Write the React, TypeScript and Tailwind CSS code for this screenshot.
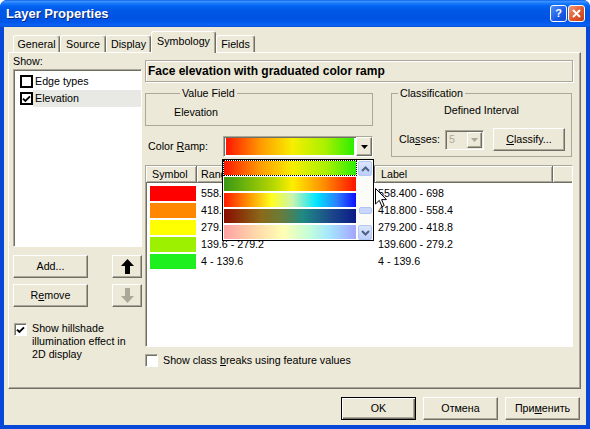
import React from "react";

const raised =
  "border border-t-white border-l-white border-r-[#716f64] border-b-[#716f64] shadow-[inset_-1px_-1px_0_#aca899]";
const sunken =
  "border border-t-[#aca899] border-l-[#aca899] border-r-white border-b-white shadow-[inset_1px_1px_0_#716f64]";

const ramps = [
  "bg-[linear-gradient(to_right,#ff1500,#ff9a00_27%,#f7ee00_52%,#a8f000_78%,#2cee00)]",
  "bg-[linear-gradient(to_right,#3a9815,#b8d800_38%,#ffee00_52%,#ff8c00_76%,#ff1200)]",
  "bg-[linear-gradient(to_right,#ff1a00,#ff9000_18%,#ffff20_36%,#c8f4b0_52%,#00e6ff_70%,#2a7cff_86%,#1010ff)]",
  "bg-[linear-gradient(to_right,#8a0c00,#8a6a18_28%,#687c3c_44%,#1e8a84_60%,#1c4c8a_80%,#0c1a88)]",
  "bg-[linear-gradient(to_right,#ffa0a4,#ffd4a8_22%,#ffffb4_45%,#c4ffd8_64%,#a4e6ff_80%,#a4a4ff)]",
];

const classes = [
  { color: "bg-[#ff0000]", range: "558.4 - 698", label: "558.400 - 698" },
  { color: "bg-[#ff8800]", range: "418.8 - 558.4", label: "418.800 - 558.4" },
  { color: "bg-[#ffff00]", range: "279.2 - 418.8", label: "279.200 - 418.8" },
  { color: "bg-[#9cf000]", range: "139.6 - 279.2", label: "139.600 - 279.2" },
  { color: "bg-[#1ef01e]", range: "4 - 139.6", label: "4 - 139.6" },
];

const tabs = [
  { name: "General", w: "w-[47px]" },
  { name: "Source", w: "w-[46px]" },
  { name: "Display", w: "w-[45px]" },
  { name: "Symbology", w: "w-[65px]", active: true },
  { name: "Fields", w: "w-[39px]" },
];

function Check() {
  return (
    <svg width="9" height="8" viewBox="0 0 9 8">
      <path d="M1 3.6 L3.4 6 L8 1.4" fill="none" stroke="#000" strokeWidth="1.9" />
    </svg>
  );
}

function Btn({ w, def, children }: { w: string; def?: boolean; children: React.ReactNode }) {
  return (
    <button
      type="button"
      className={`${w} h-[23px] flex items-center justify-center bg-[#ece9d8] ${
        def
          ? "border border-black shadow-[inset_1px_1px_0_#fff,inset_-1px_-1px_0_#716f64,inset_-2px_-2px_0_#aca899]"
          : raised
      }`}
    >
      {children}
    </button>
  );
}

function DownTri({ color }: { color: string }) {
  return (
    <svg width="7" height="4" viewBox="0 0 7 4">
      <path d="M0 0 H7 L3.5 4 Z" fill={color} />
    </svg>
  );
}

function ScrollBtn({ up }: { up?: boolean }) {
  return (
    <div className="w-[14px] h-[15px] rounded-[2px] border border-[#b4c8f6] bg-[linear-gradient(to_bottom,#dce6fd,#bccffa)] flex items-center justify-center">
      <svg width="9" height="6" viewBox="0 0 9 6">
        <path
          d={up ? "M1 5 L4.5 1.5 L8 5" : "M1 1 L4.5 4.5 L8 1"}
          fill="none"
          stroke="#4d6185"
          strokeWidth="2"
        />
      </svg>
    </div>
  );
}

function TitleBar() {
  return (
    <div className="h-[27px] flex items-center pl-[6px] pr-[5px] bg-[linear-gradient(180deg,#0a5ee8_0%,#3d93ff_5%,#1a7cfc_12%,#0364f2_22%,#0057e6_40%,#0054e3_65%,#0057ea_82%,#0a62f4_92%,#0a50d8_100%)]">
      <div className="flex-1 text-white font-bold text-[13px] [text-shadow:1px_1px_0_#0c2a80]">
        Layer Properties
      </div>
      <div className="flex gap-[1px]">
        <div className="w-[17px] h-[17px] rounded-[3px] border border-white bg-[linear-gradient(135deg,#4f8ef8,#1a5ae6_60%,#1048d0)] flex items-center justify-center text-white font-bold text-[11px]">
          ?
        </div>
        <div className="w-[17px] h-[17px] rounded-[3px] border border-white bg-[linear-gradient(135deg,#ef9a7a,#e0572c_55%,#c23e18)] flex items-center justify-center">
          <svg width="9" height="9" viewBox="0 0 9 9">
            <path d="M1 1 L8 8 M8 1 L1 8" stroke="#fff" strokeWidth="2" />
          </svg>
        </div>
      </div>
    </div>
  );
}

function Tabs() {
  return (
    <div className="h-[25px] flex items-end pl-[9px]">
      {tabs.map((t) =>
        t.active ? (
          <div
            key={t.name}
            className={`${t.w} relative z-10 mb-[-1px] h-[22px] pb-[3px] flex items-center justify-center bg-[#ece9d8] rounded-t-[3px] border-t border-l border-r border-t-white border-l-white border-r-[#716f64] shadow-[inset_-1px_0_0_#aca899]`}
          >
            {t.name}
          </div>
        ) : (
          <div
            key={t.name}
            className={`${t.w} h-[17px] flex items-center justify-center rounded-t-[3px] border-t border-l border-r border-t-white border-l-white border-r-[#716f64] shadow-[inset_-1px_0_0_#aca899]`}
          >
            {t.name}
          </div>
        )
      )}
    </div>
  );
}

function RampCombo() {
  return (
    <div className={`relative w-[150px] h-[21px] bg-white ${sunken} flex items-center pl-[2px]`}>
      <div className={`w-[128px] h-[17px] ${ramps[0]}`} />
      <div className={`ml-[2px] w-[16px] h-[19px] bg-[#ece9d8] ${raised} flex items-center justify-center`}>
        <DownTri color="#000" />
      </div>
      <div className="absolute left-[-2px] top-[22px] z-20 w-[152px] h-[82px] bg-white border border-black flex">
        <div className="w-[134px] flex flex-col">
          {ramps.map((r, i) => (
            <div
              key={r}
              className={`h-[16px] ${i === 0 ? "border border-dotted border-black" : "p-[1px]"}`}
            >
              <div className={`h-[14px] ${r}`} />
            </div>
          ))}
        </div>
        <div className="w-[16px] flex flex-col items-center pt-[1px] bg-[#fbfbf8]">
          <ScrollBtn up />
          <div className="h-[31px]" />
          <div className="w-[13px] h-[7px] rounded-[2px] border border-[#b0c4f4] bg-[#c8d8fd]" />
          <div className="h-[11px]" />
          <ScrollBtn />
        </div>
      </div>
    </div>
  );
}

function LeftColumn() {
  return (
    <div className="ml-[4px] w-[129px] flex flex-col">
      <div className="mt-[2px] h-[13px]">Show:</div>
      <div className={`mt-[1px] h-[178px] bg-white ${sunken} pt-[3px] pl-[6px] flex flex-col`}>
        <div className="h-[17px] flex items-center">
          <div className="w-[13px] h-[13px] border-2 border-black bg-white" />
          <div className="flex-1 h-full flex items-center pl-[2px]">Edge types</div>
        </div>
        <div className="h-[17px] flex items-center">
          <div className="w-[13px] h-[13px] border-2 border-black bg-white flex items-center justify-center">
            <Check />
          </div>
          <div className="flex-1 h-full flex items-center pl-[2px] bg-[#e8e8e4]">Elevation</div>
        </div>
      </div>
      <div className="mt-[8px] flex justify-between">
        <Btn w="w-[75px]">Add...</Btn>
        <Btn w="w-[30px]">
          <svg width="13" height="15" viewBox="0 0 13 15">
            <path d="M6.5 0 L13 7 H9 V15 H4 V7 H0 Z" fill="#000" />
          </svg>
        </Btn>
      </div>
      <div className="mt-[6px] flex justify-between">
        <Btn w="w-[75px]">
          R<u>e</u>move
        </Btn>
        <Btn w="w-[30px]">
          <svg width="13" height="15" viewBox="0 0 13 15">
            <path d="M6.5 15 L13 8 H9 V0 H4 V8 H0 Z" fill="#aca899" />
          </svg>
        </Btn>
      </div>
      <div className="mt-[15px] ml-[1px] flex items-start">
        <div className={`mt-[1px] w-[13px] h-[13px] bg-white ${sunken} flex items-center justify-center`}>
          <Check />
        </div>
        <div className="ml-[5px]">
          Show hillshade
          <br />
          illumination effect in
          <br />
          2D display
        </div>
      </div>
    </div>
  );
}

function RightColumn() {
  return (
    <div className="ml-[3px] w-[428px] flex flex-col">
      <div className="mt-[7px] h-[22px] border border-[#aca899] shadow-[inset_1px_1px_0_#fff,1px_1px_0_#fff] flex items-center pl-[2px] font-bold text-[12px]">
        Face elevation with graduated color ramp
      </div>

      <div className="mt-[5px] flex">
        <div className="w-[228px] flex flex-col">
          <fieldset className="min-w-0 border border-[#aca899] pl-[28px] pt-[6px] pb-[6px]">
            <legend className="ml-[6px] px-[2px]">Value Field</legend>
            <div>Elevation</div>
          </fieldset>
          <div className="mt-[10px] h-[21px] flex items-center">
            <div className="w-[78px] pl-[3px]">
              Color <u>R</u>amp:
            </div>
            <RampCombo />
          </div>
        </div>
        <fieldset className="ml-[18px] w-[181px] min-w-0 border border-[#aca899] pt-[4px] pb-[5px]">
          <legend className="ml-[6px] px-[2px]">Classification</legend>
          <div className="text-center">Defined Interval</div>
          <div className="mt-[11px] h-[23px] pl-[7px] flex items-center">
            <div className="w-[46px]">
              Cla<u>s</u>ses:
            </div>
            <div className={`w-[39px] h-[20px] ${sunken} bg-[#ece9d8] flex items-center pl-[3px] pr-[1px]`}>
              <div className="flex-1 text-[#aca899]">5</div>
              <div className={`w-[15px] h-[16px] ${raised} flex items-center justify-center`}>
                <DownTri color="#aca899" />
              </div>
            </div>
            <div className="ml-[9px]">
              <Btn w="w-[72px]">
                <u>C</u>lassify...
              </Btn>
            </div>
          </div>
        </fieldset>
      </div>

      <div className={`mt-[8px] h-[182px] bg-white ${sunken} flex flex-col`}>
        <div className="h-[17px] flex">
          <div className="w-[51px] pl-[6px] flex items-center bg-[#ece9d8] border-r border-b border-r-[#716f64] border-b-[#716f64] shadow-[inset_1px_1px_0_#fff,inset_-1px_-1px_0_#aca899]">
            Symbol
          </div>
          <div className="w-[178px] pl-[4px] flex items-center bg-[#ece9d8] border-r border-b border-r-[#716f64] border-b-[#716f64] shadow-[inset_1px_1px_0_#fff,inset_-1px_-1px_0_#aca899]">
            Range
          </div>
          <div className="w-[178px] pl-[6px] flex items-center bg-[#ece9d8] border-r border-b border-r-[#716f64] border-b-[#716f64] shadow-[inset_1px_1px_0_#fff,inset_-1px_-1px_0_#aca899]">
            Label
          </div>
          <div className="flex-1 bg-[#ece9d8] border-b border-b-[#716f64] shadow-[inset_1px_1px_0_#fff,inset_0_-1px_0_#aca899]" />
        </div>
        <div className="pt-[2px] flex flex-col">
          {classes.map((c) => (
            <div key={c.label} className="h-[17px] flex items-center">
              <div className="w-[51px] pl-[4px]">
                <div className={`w-[46px] h-[15px] ${c.color}`} />
              </div>
              <div className="w-[178px] pl-[4px]">{c.range}</div>
              <div className="pl-[3px]">{c.label}</div>
            </div>
          ))}
        </div>
      </div>

      <div className="mt-[7px] flex items-center">
        <div className={`w-[13px] h-[13px] bg-white ${sunken}`} />
        <div className="ml-[5px]">
          Show class <u>b</u>reaks using feature values
        </div>
      </div>
    </div>
  );
}

function Cursor() {
  return (
    <svg
      width="12"
      height="20"
      viewBox="0 0 12 20"
      className="absolute left-[375px] top-[188px] z-30"
    >
      <path
        d="M0.5 0.5 V16 L4.3 12.4 L7 18.6 L9.2 17.6 L6.6 11.6 H11.5 Z"
        fill="#fff"
        stroke="#000"
        strokeWidth="1"
      />
    </svg>
  );
}

export default function App() {
  return (
    <div className="relative w-[590px] h-[429px] overflow-hidden rounded-t-[7px] bg-[#0848d8] font-['Liberation_Sans',Arial,sans-serif] text-[10.7px] leading-[13px] text-black flex flex-col">
      <TitleBar />
      <div className="flex-1 mx-[4px] mb-[4px] bg-[#ece9d8] flex flex-col">
        <Tabs />
        <div className="ml-[4px] w-[573px] h-[337px] border border-t-white border-l-white border-r-[#716f64] border-b-[#716f64] shadow-[inset_-1px_-1px_0_#aca899] flex">
          <LeftColumn />
          <RightColumn />
        </div>
        <div className="mt-[8px] pr-[6px] flex justify-end gap-[7px]">
          <Btn w="w-[75px]" def>
            OK
          </Btn>
          <Btn w="w-[75px]">Отмена</Btn>
          <Btn w="w-[75px]">
            При<u>м</u>енить
          </Btn>
        </div>
      </div>
      <Cursor />
    </div>
  );
}
